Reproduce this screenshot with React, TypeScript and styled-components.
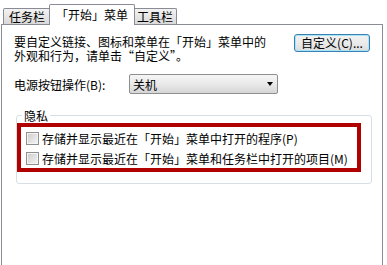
import styled, { createGlobalStyle } from 'styled-components';

const GlobalStyle = createGlobalStyle`
  html, body {
    margin: 0;
    padding: 0;
    background: #ffffff;
  }
  body {
    font-family: 'Noto Sans CJK SC', 'Liberation Sans', sans-serif;
    font-size: 12px;
    color: #000;
  }
`;

const tabs = ['任务栏', '「开始」菜单', '工具栏'];

const privacyOptions = [
  '存储并显示最近在「开始」菜单中打开的程序(P)',
  '存储并显示最近在「开始」菜单和任务栏中打开的项目(M)',
];

const App = () => {
  return (
    <Window>
      <GlobalStyle />
      <TabStrip>
        {tabs.map((label, i) => (
          <Tab key={label} $active={i === 1} $first={i === 0}>
            {label}
          </Tab>
        ))}
      </TabStrip>
      <Panel>
        <IntroRow>
          <Intro>
            <IntroLine>要自定义链接、图标和菜单在「开始」菜单中的</IntroLine>
            <IntroLine>外观和行为，请单击“自定义”。</IntroLine>
          </Intro>
          <Button>自定义(C)...</Button>
        </IntroRow>
        <PowerRow>
          <Label>电源按钮操作(B):</Label>
          <Select>
            <span>关机</span>
            <Arrow />
          </Select>
        </PowerRow>
        <GroupBox>
          <Legend>隐私</Legend>
          <Highlight>
            {privacyOptions.map((text) => (
              <CheckRow key={text}>
                <CheckBox />
                <span>{text}</span>
              </CheckRow>
            ))}
          </Highlight>
        </GroupBox>
      </Panel>
    </Window>
  );
};

export default App;

const Window = styled.div`
  box-sizing: border-box;
  width: 387px;
  height: 100vh;
  padding-left: 1px;
  display: flex;
  flex-direction: column;
`;

const TabStrip = styled.div`
  display: flex;
  align-items: flex-end;
  height: 24px;
  padding-left: 2px;
`;

const Tab = styled.div<{ $active?: boolean; $first?: boolean }>`
  box-sizing: border-box;
  position: relative;
  border: 1px solid #898c95;
  border-bottom: none;
  border-radius: 2px 2px 0 0;
  white-space: nowrap;
  line-height: 14px;
  height: ${(p) => (p.$active ? '21px' : '16px')};
  margin-bottom: ${(p) => (p.$active ? '-1px' : '0')};
  margin-left: ${(p) => (p.$first ? '0' : '-2px')};
  padding: ${(p) => (p.$active ? '3px 6px 0' : p.$first ? '1px 5px 0' : '1px 3px 0')};
  background: ${(p) =>
    p.$active ? '#ffffff' : 'linear-gradient(#f3f3f3, #e6e6e6 50%, #d9d9d9)'};
  z-index: ${(p) => (p.$active ? 1 : 0)};
`;

const Panel = styled.div`
  box-sizing: border-box;
  flex: 1;
  width: 382px;
  border: 1px solid #898c95;
  border-bottom: none;
  background: #ffffff;
  padding: 9px 10px 0 12px;
`;

const IntroRow = styled.div`
  display: flex;
  justify-content: space-between;
  align-items: flex-start;
  padding-right: 2px;
`;

const Intro = styled.div`
  display: flex;
  flex-direction: column;
  gap: 1px;
  margin-top: 1px;
`;

const IntroLine = styled.div`
  line-height: 13px;
  height: 13px;
  white-space: nowrap;
`;

const Button = styled.div`
  box-sizing: border-box;
  width: 76px;
  height: 18px;
  border: 1px solid #3c7fb1;
  border-radius: 3px;
  box-shadow: inset 0 0 0 1px #a8e4f7;
  background: linear-gradient(#f2f2f2, #ebebeb 50%, #dcdcdc);
  line-height: 16px;
  text-align: center;
  white-space: nowrap;
`;

const PowerRow = styled.div`
  display: flex;
  align-items: center;
  margin-top: 12px;
`;

const Label = styled.span`
  width: 115px;
`;

const Select = styled.div`
  box-sizing: border-box;
  width: 149px;
  height: 20px;
  display: flex;
  align-items: center;
  justify-content: space-between;
  padding: 0 4px 0 3px;
  border: 1px solid #8e8f8f;
  border-radius: 2px;
  background: linear-gradient(#f6f6f6, #e9e9e9 50%, #d6d6d6);
`;

const Arrow = styled.span`
  width: 0;
  height: 0;
  border-left: 3.5px solid transparent;
  border-right: 3.5px solid transparent;
  border-top: 4px solid #000;
`;

const GroupBox = styled.fieldset`
  margin: 15px 0 0 2px;
  padding: 0 10px 11px 0;
  border: 1px solid #d5dfe5;
  border-radius: 3px;
  min-width: 0;
`;

const Legend = styled.legend`
  margin-left: 5px;
  padding: 0 2px;
  line-height: 13px;
`;

const Highlight = styled.div`
  border: 4px solid #b00000;
  padding: 1px 0 0 5px;
  margin-top: 1px;
`;

const CheckRow = styled.div`
  display: flex;
  align-items: center;
  height: 20px;
  gap: 3px;
  white-space: nowrap;
`;

const CheckBox = styled.span`
  box-sizing: border-box;
  width: 13px;
  height: 13px;
  border: 1px solid #8f8f8f;
  box-shadow: inset 0 0 0 1px #f4f4f4;
  background: linear-gradient(135deg, #cbcbcb, #f6f6f6);
`;
